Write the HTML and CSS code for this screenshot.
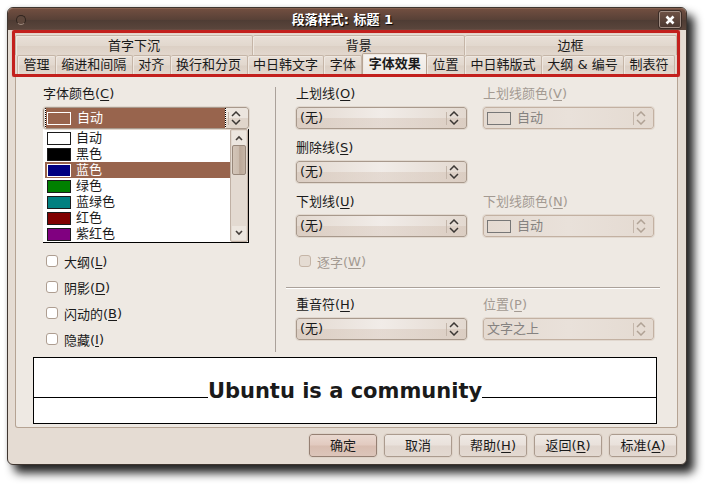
FILE: index.html
```html
<!DOCTYPE html>
<html lang="zh-CN">
  <head>
    <meta charset="utf-8">
    <title>段落样式: 标题 1</title>
    <link rel="stylesheet" href="styles.css">
  </head>
  <body>
    <svg class="defs" width="0" height="0">
      <symbol id="arrows" viewBox="0 0 10 14">
        <path d="M1 5 L5 1 L9 5 M1 9 L5 13 L9 9" fill="none" stroke="currentColor" stroke-width="1.5"/>
      </symbol>
    </svg>
    <main class="window">
      <header class="titlebar">
        <button class="menu-dot" aria-label="菜单"></button>
        <h1>段落样式: 标题 1</h1>
        <button class="close" aria-label="关闭">
          <svg width="10" height="10" viewBox="0 0 10 10">
            <path d="M1.5 1.5 L8.5 8.5 M8.5 1.5 L1.5 8.5" stroke="#fff" stroke-width="2.6"/>
          </svg>
        </button>
      </header>

      <nav class="tabs" role="tablist">
        <div class="tab-row groups">
          <button role="tab">首字下沉</button>
          <button role="tab">背景</button>
          <button role="tab">边框</button>
        </div>
        <div class="tab-row pages">
          <button role="tab">管理</button>
          <button role="tab">缩进和间隔</button>
          <button role="tab">对齐</button>
          <button role="tab">换行和分页</button>
          <button role="tab">中日韩文字</button>
          <button role="tab">字体</button>
          <button role="tab" class="active" aria-selected="true">字体效果</button>
          <button role="tab">位置</button>
          <button role="tab">中日韩版式</button>
          <button role="tab">大纲 &amp; 编号</button>
          <button role="tab">制表符</button>
        </div>
      </nav>

      <section class="panel">
        <div class="columns">
          <!-- font colour and character flags -->
          <div class="left">
            <div class="field">
              <label for="color">字体颜色(<u>C</u>)</label>
              <div class="combo focused">
                <select id="color"><option>自动</option></select>
                <i class="swatch"></i>
                <svg class="arrows"><use href="#arrows"/></svg>
              </div>
            </div>
            <div class="dropdown">
              <ul role="listbox" aria-label="字体颜色">
                <li role="option"><i class="swatch white"></i>自动</li>
                <li role="option"><i class="swatch black"></i>黑色</li>
                <li role="option" class="current" aria-selected="true"><i class="swatch blue"></i>蓝色</li>
                <li role="option"><i class="swatch green"></i>绿色</li>
                <li role="option"><i class="swatch teal"></i>蓝绿色</li>
                <li role="option"><i class="swatch red"></i>红色</li>
                <li role="option"><i class="swatch magenta"></i>紫红色</li>
              </ul>
              <div class="scrollbar">
                <button aria-label="向上">
                  <svg width="8" height="6" viewBox="0 0 8 6"><path d="M1 5 L4 2 L7 5" fill="none" stroke="#443e3a" stroke-width="1.6"/></svg>
                </button>
                <div class="thumb"></div>
                <button class="down" aria-label="向下">
                  <svg width="8" height="6" viewBox="0 0 8 6"><path d="M1 1 L4 4 L7 1" fill="none" stroke="#443e3a" stroke-width="1.6"/></svg>
                </button>
              </div>
            </div>
            <div class="checks">
              <label><input type="checkbox">大纲(<u>L</u>)</label>
              <label><input type="checkbox">阴影(<u>D</u>)</label>
              <label><input type="checkbox">闪动的(<u>B</u>)</label>
              <label><input type="checkbox">隐藏(<u>I</u>)</label>
            </div>
          </div>

          <!-- lines and emphasis mark -->
          <div class="right">
            <div class="fields">
              <div class="field">
                <label for="overline">上划线(<u>O</u>)</label>
                <div class="combo">
                  <select id="overline"><option>(无)</option></select>
                  <svg class="arrows"><use href="#arrows"/></svg>
                </div>
              </div>
              <div class="field off">
                <label for="overline-color">上划线颜色(<u>V</u>)</label>
                <div class="combo">
                  <select id="overline-color" class="has-swatch" disabled><option>自动</option></select>
                  <i class="swatch"></i>
                  <svg class="arrows"><use href="#arrows"/></svg>
                </div>
              </div>
              <div class="field first">
                <label for="strike">删除线(<u>S</u>)</label>
                <div class="combo">
                  <select id="strike"><option>(无)</option></select>
                  <svg class="arrows"><use href="#arrows"/></svg>
                </div>
              </div>
              <div class="field first">
                <label for="underline">下划线(<u>U</u>)</label>
                <div class="combo">
                  <select id="underline"><option>(无)</option></select>
                  <svg class="arrows"><use href="#arrows"/></svg>
                </div>
              </div>
              <div class="field off">
                <label for="underline-color">下划线颜色(<u>N</u>)</label>
                <div class="combo">
                  <select id="underline-color" class="has-swatch" disabled><option>自动</option></select>
                  <i class="swatch"></i>
                  <svg class="arrows"><use href="#arrows"/></svg>
                </div>
              </div>
            </div>
            <div class="checks words">
              <label class="off"><input type="checkbox" disabled>逐字(<u>W</u>)</label>
            </div>
            <hr>
            <div class="fields">
              <div class="field">
                <label for="emphasis">重音符(<u>H</u>)</label>
                <div class="combo">
                  <select id="emphasis"><option>(无)</option></select>
                  <svg class="arrows"><use href="#arrows"/></svg>
                </div>
              </div>
              <div class="field off">
                <label for="position">位置(<u>P</u>)</label>
                <div class="combo">
                  <select id="position" disabled><option>文字之上</option></select>
                  <svg class="arrows"><use href="#arrows"/></svg>
                </div>
              </div>
            </div>
          </div>
        </div>

        <div class="preview">
          <span class="rule"></span>
          <strong>Ubuntu is a community</strong>
          <span class="rule"></span>
        </div>
      </section>

      <footer class="buttons">
        <button class="default">确定</button>
        <button>取消</button>
        <button>帮助(<u>H</u>)</button>
        <button>返回(<u>R</u>)</button>
        <button>标准(<u>A</u>)</button>
      </footer>
    </main>
  </body>
</html>
```
FILE: styles.css
```css
* {
  box-sizing: border-box;
}
body {
  min-height: 100vh;
  margin: 0;
  padding: 7px 22px 24px 7px;
  background: #fff;
  color: #1a1a1a;
}
body, button, select {
  font-family: "DejaVu Sans", "Noto Sans CJK SC", sans-serif;
  font-size: 13px;
}
button {
  margin: 0;
  padding: 0;
  color: inherit;
}
u {
  text-underline-offset: 2px;
}
.defs {
  position: absolute;
}

.window {
  background: #e5dcd3;
  border: 1px solid #3f3630;
  border-radius: 6px;
  box-shadow: 7px 8px 10px #222, 0 0 4px #ddd;
}

/* title bar */
.titlebar {
  display: flex;
  align-items: center;
  height: 22px;
  padding: 0 5px 0 8px;
  border-radius: 5px 5px 0 0;
  border-top: 1px solid #85604f;
  background: linear-gradient(#714e40, #584137 50%, #4e3c34 52%, #5b463c);
}
.titlebar h1 {
  flex: 1;
  margin: 0;
  font-size: 13px;
  line-height: 18px;
  text-align: center;
  color: #fff;
  text-shadow: 1px 1px 1px #000;
}
.menu-dot {
  width: 10px;
  height: 10px;
  border: 1px solid #30251f;
  border-bottom-color: #a08c80;
  border-radius: 50%;
  background: #5d473c;
}
.close {
  display: flex;
  align-items: center;
  justify-content: center;
  width: 22px;
  height: 17px;
  border: 1px solid #a08d83;
  border-radius: 2px;
  outline: 1px solid #3a2b25;
  background: linear-gradient(#6c5044, #4d3a32);
}

/* tabs */
.tabs {
  margin: 0 6px 0 4px;
  padding-top: 2px;
  border: 3px solid #c3201d;
  border-radius: 2px;
  box-shadow: 0 0 1px #d77a74, inset 0 0 1px #d77a74;
}
.tab-row {
  display: flex;
}
.tab-row button {
  flex: 1 1 auto;
  border: 1px solid #c5b5a7;
  border-width: 1px 1px 0 0;
  border-radius: 2px 2px 0 0;
  background: linear-gradient(#e8dfd7, #e2d8ce 50%, #dcd0c5 55%, #e2d7cd);
  line-height: 18px;
  white-space: nowrap;
  box-shadow: inset 1px 1px #efe8e1;
}
.groups {
  height: 20px;
}
.groups button {
  flex: 1 1 0;
}
.groups button:first-child {
  flex-grow: 1.12;
}
.tab-row button:first-child {
  border-left-width: 1px;
}
.pages {
  height: 19px;
  padding: 0 2px;
}
.pages .active {
  margin-top: -2px;
  background: linear-gradient(#f6f3f0, #eee9e3);
  border-left-width: 1px;
  border-color: #b5a393;
  font-weight: bold;
}

.panel {
  margin: 0 8px 0 7px;
  padding: 6px 20px 3px 17px;
  border: 1px solid #b5a393;
  border-top: 0;
  border-radius: 0 0 3px 3px;
  background: #eee9e3;
}
.columns {
  display: grid;
  grid-template-columns: 233px 1fr;
  padding-left: 10px;
}
.left {
  padding-right: 27px;
  background: linear-gradient(#aaa19a, #aaa19a) right 0 top 4px / 1px 100% no-repeat;
}
.right {
  padding-left: 10px;
}

/* fields */
.fields {
  display: grid;
  grid-template-columns: 1fr 1fr;
  gap: 8px 16px;
  padding: 0 3px 0 10px;
}
.field > label {
  display: block;
  margin-bottom: 2px;
  line-height: 22px;
}
.first {
  grid-column: 1;
}
.off {
  color: #a39a92;
}
.combo {
  display: grid;
  align-items: center;
  height: 22px;
  color: #3c3835;
}
.combo > * {
  grid-area: 1 / 1;
}
.combo select {
  appearance: none;
  width: 100%;
  height: 22px;
  margin: 0;
  padding: 0 24px 0 3px;
  border: 1px solid #a8998c;
  border-radius: 3px;
  outline: 1px solid #e1d8cf;
  background:
    linear-gradient(#c4b6aa, #c4b6aa) right 19px center / 1px 13px no-repeat,
    linear-gradient(transparent 50%, rgba(205, 185, 170, 0.35) 52%),
    linear-gradient(90deg, #e3d9d0, #f1ece8 50%, #e3d9d0);
  color: #1a1a1a;
  line-height: 20px;
}
.arrows {
  justify-self: end;
  width: 10px;
  height: 14px;
  margin-right: 8px;
  pointer-events: none;
}
.swatch {
  width: 24px;
  height: 13px;
  margin-left: 4px;
  border: 1px solid #777;
  pointer-events: none;
}
.combo .has-swatch {
  padding-left: 33px;
}
.off .combo {
  color: #b0a295;
}
.off select {
  border-color: #c3b1a2;
  background:
    linear-gradient(#c4b6aa, #c4b6aa) right 19px center / 1px 13px no-repeat,
    linear-gradient(90deg, #e4dad1, #e9e1da 50%, #e4dad1);
  color: #858280;
  opacity: 1;
}
.focused select {
  padding-left: 33px;
  background:
    repeating-linear-gradient(#000 0 1px, #fff 1px 2px) left 1px top / 1px 100% no-repeat,
    repeating-linear-gradient(#000 0 1px, #fff 1px 2px) right 22px top / 1px 100% no-repeat,
    linear-gradient(90deg, #98644d, #98644d) left 1px top / calc(100% - 24px) 100% no-repeat,
    linear-gradient(#c4b6aa, #c4b6aa) right 19px center / 1px 13px no-repeat,
    linear-gradient(#ece5de 50%, #e0d5cb 52%);
  color: #fff;
}
.focused .swatch {
  border-color: #fff;
}

/* open colour list */
.dropdown {
  display: flex;
  height: 114px;
  padding-left: 1px;
  border-right: 1px solid #000;
  border-bottom: 1px solid #000;
  background: #fff;
}
.dropdown ul {
  flex: 1;
  margin: 0;
  padding: 1px 0 0 1px;
  list-style: none;
}
.dropdown li {
  display: flex;
  align-items: center;
  gap: 5px;
  height: 16px;
  line-height: 16px;
}
.dropdown li .swatch {
  margin-left: 2px;
  border-color: #1a1a1a;
}
.dropdown .current {
  background: #98644d;
  color: #fff;
}
.dropdown .current .swatch {
  border-color: #fff;
}
.white { background: #fff; }
.black { background: #000; }
.blue { background: #000080; }
.green { background: #008000; }
.teal { background: #008080; }
.red { background: #800000; }
.magenta { background: #800080; }

.scrollbar {
  display: flex;
  flex-direction: column;
  width: 18px;
  padding: 1px;
  border: 1px solid #bfb0a4;
  border-radius: 2px;
  background: #e3dad1;
}
.scrollbar button {
  display: flex;
  align-items: center;
  justify-content: center;
  height: 14px;
  border: 0;
  background: #ece6df;
}
.scrollbar .down {
  margin-top: auto;
}
.thumb {
  height: 30px;
  border: 1px solid #98887b;
  border-radius: 2px;
  background: linear-gradient(90deg, #d3c5b8, #cbbcae 50%, #baa797 55%, #c5b5a6);
}

/* tick boxes */
.checks {
  padding: 5px 0 0 3px;
}
.checks label {
  display: flex;
  align-items: center;
  height: 26px;
}
.checks input {
  appearance: none;
  width: 12px;
  height: 12px;
  margin: 0 6px 0 0;
  border: 1px solid #ae9e91;
  border-radius: 3px;
  background: #fff;
}
.checks input:disabled {
  border-color: #c5b5a7;
  background: #e5dcd3;
}
.words {
  padding: 11px 0 13px 13px;
}
hr {
  height: 2px;
  margin: 0 -3px 5px 0;
  border: 0;
  border-top: 1px solid #aaa19a;
  border-bottom: 1px solid #fff;
}

/* preview line */
.preview {
  display: flex;
  align-items: baseline;
  height: 67px;
  margin-top: 5px;
  padding-top: 19px;
  border: 1px solid #000;
  background: #fff;
}
.preview strong {
  font-size: 21px;
  line-height: 28px;
}
.rule {
  flex: 1;
  height: 1px;
  background: #000;
}

.buttons {
  display: flex;
  justify-content: flex-end;
  gap: 7px;
  padding: 6px 9px 7px;
}
.buttons button {
  min-width: 68px;
  height: 23px;
  border: 1px solid #ab9b8e;
  border-radius: 3px;
  outline: 1px solid #ded3c9;
  background: linear-gradient(#efe9e4, #e9e1db 48%, #e0d5cd 52%, #e3d9d1);
  line-height: 18px;
}
.buttons .default {
  border-color: #958073;
  background: linear-gradient(#e9d8cf, #e2cabf 48%, #d8bdb0 52%, #dcc5ba);
}
```
